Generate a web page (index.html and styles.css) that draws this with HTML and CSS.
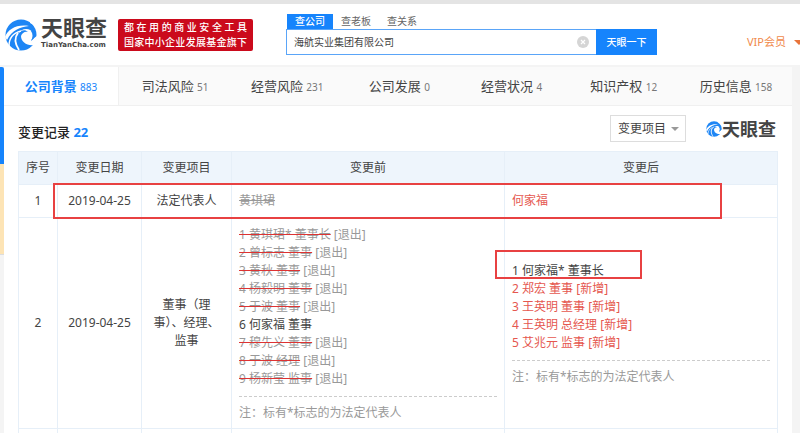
FILE: index.html
```html
<!DOCTYPE html>
<html lang="zh-CN">
<head>
  <meta charset="UTF-8">
  <meta name="viewport" content="width=device-width, initial-scale=1.0">
  <title>海航实业集团有限公司 - 天眼查</title>
  <link rel="stylesheet" href="styles.css">
</head>
<body>
  <svg class="defs" width="0" height="0" aria-hidden="true">
    <symbol id="swirl" viewBox="0 0 32 32">
      <circle cx="16" cy="16" r="15.5" fill="#1e86f5"/>
      <!-- opening of the eye -->
      <path d="M13 15C16 9 25 8 28 14C29 17 28 19 26 21L32 17L32 23L29 26C22 27 16 23 16 17C17 14 20 12 23 13C20 10 16 11 13 15Z" fill="#fff"/>
      <path d="M28 12C31 15 31 19 26 22C28 18 28 15 26 12Z" fill="#1e86f5"/>
      <!-- light streaks -->
      <path d="M0 18C3 10 12 5 24 7C15 8 7 11 2 21Z" fill="#fff"/>
      <path d="M4 27C4 19 8 14 16 12" fill="none" stroke="#fff" stroke-width="1.4"/>
      <path d="M13 14C9 19 10 25 14 31" fill="none" stroke="#fff" stroke-width="1.8"/>
      <path d="M25 0L32 0L32 10C30 7 28 5 25 4Z" fill="#fff"/>
    </symbol>
  </svg>

  <header class="header">
    <a class="logo" href="#">
      <svg class="logo-icon"><use href="#swirl"/></svg>
      <span class="logo-text">
        <span class="logo-name">天眼查</span>
        <span class="logo-domain">TianYanCha.com</span>
      </span>
    </a>
    <div class="slogan">
      <p>都在用的商业安全工具</p>
      <p>国家中小企业发展基金旗下</p>
    </div>
    <form class="search" onsubmit="return false">
      <div class="search-tabs">
        <button type="button" class="active">查公司</button>
        <button type="button">查老板</button>
        <button type="button">查关系</button>
      </div>
      <div class="search-row">
        <div class="search-box">
          <input type="text" id="keyword" aria-label="公司名称" value="海航实业集团有限公司">
          <button type="button" class="clear" aria-label="清除">
            <svg viewBox="0 0 12 12"><circle cx="6" cy="6" r="6" fill="#d5d5d5"/><path d="M4 4l4 4M8 4l-4 4" stroke="#fff" stroke-width="1.2"/></svg>
          </button>
        </div>
        <button type="submit" class="search-btn">天眼一下</button>
      </div>
    </form>
    <a class="vip" href="#">VIP会员</a>
  </header>

  <div class="layout">
    <aside class="side">
      <div class="side-blue"></div>
      <div class="side-cream"></div>
      <div class="side-rest"></div>
    </aside>
    <main class="main">
      <nav class="tabs">
        <a href="#" class="active">公司背景 <span>883</span></a>
        <a href="#">司法风险 <span>51</span></a>
        <a href="#">经营风险 <span>231</span></a>
        <a href="#">公司发展 <span>0</span></a>
        <a href="#">经营状况 <span>4</span></a>
        <a href="#">知识产权 <span>12</span></a>
        <a href="#">历史信息 <span>158</span></a>
      </nav>

      <section class="record">
        <div class="record-head">
          <h2>变更记录 <span>22</span></h2>
          <div class="select">
            <select id="item" aria-label="变更项目">
              <option>变更项目</option>
            </select>
          </div>
          <div class="mark">
            <svg class="mark-icon"><use href="#swirl"/></svg>
            <span>天眼查</span>
          </div>
        </div>

        <div class="table-wrap">
          <table>
            <colgroup>
              <col class="c-no">
              <col class="c-date">
              <col class="c-item">
              <col class="c-text">
              <col class="c-text">
            </colgroup>
            <thead>
              <tr><th>序号</th><th>变更日期</th><th>变更项目</th><th>变更前</th><th>变更后</th></tr>
            </thead>
            <tbody>
              <tr>
                <td>1</td>
                <td>2019-04-25</td>
                <td>法定代表人</td>
                <td class="left"><del class="gone">黄琪珺</del></td>
                <td class="left new">何家福</td>
              </tr>
              <tr>
                <td>2</td>
                <td>2019-04-25</td>
                <td>董事（理事）、经理、监事</td>
                <td class="left">
                  <ul>
                    <li class="gone"><del>1 黄琪珺* 董事长</del> [退出]</li>
                    <li class="gone"><del>2 曾标志 董事</del> [退出]</li>
                    <li class="gone"><del>3 黄秋 董事</del> [退出]</li>
                    <li class="gone"><del>4 杨毅明 董事</del> [退出]</li>
                    <li class="gone"><del>5 于波 董事</del> [退出]</li>
                    <li>6 何家福 董事</li>
                    <li class="gone"><del>7 穆先义 董事</del> [退出]</li>
                    <li class="gone"><del>8 于波 经理</del> [退出]</li>
                    <li class="gone"><del>9 杨新莹 监事</del> [退出]</li>
                  </ul>
                  <p class="note">注：标有*标志的为法定代表人</p>
                </td>
                <td class="left">
                  <ul>
                    <li>1 何家福* 董事长</li>
                    <li class="new">2 郑宏 董事 [新增]</li>
                    <li class="new">3 王英明 董事 [新增]</li>
                    <li class="new">4 王英明 总经理 [新增]</li>
                    <li class="new">5 艾兆元 监事 [新增]</li>
                  </ul>
                  <p class="note">注：标有*标志的为法定代表人</p>
                </td>
              </tr>
              <tr class="blank"><td></td><td></td><td></td><td></td><td></td></tr>
            </tbody>
          </table>
          <div class="frame frame-row"></div>
          <div class="frame frame-name"></div>
        </div>
      </section>
    </main>
  </div>
</body>
</html>
```

FILE: styles.css
```css
* {
  box-sizing: border-box;
}

body {
  margin: 0;
  overflow-x: hidden;
  font-family: "Noto Sans", "Noto Sans CJK SC", sans-serif;
  font-size: 12px;
  line-height: 18px;
  color: #444;
  background: #f4f4f4;
}

a {
  color: inherit;
  text-decoration: none;
}

button, input, select {
  font: inherit;
  color: inherit;
  border: 0;
  padding: 0;
  margin: 0;
  background: none;
}

h2, p, ul {
  margin: 0;
  padding: 0;
}

.defs {
  position: absolute;
}

/* header */
.header {
  display: flex;
  align-items: flex-start;
  height: 65px;
  padding: 12px 0 0 5px;
  border-top: 4px solid #e4e4e4;
  background: #fff;
}

.logo {
  display: flex;
  gap: 4px;
}

.logo-icon {
  width: 32px;
  height: 32px;
  margin-top: 3px;
}

.logo-text {
  display: flex;
  flex-direction: column;
  width: 67px;
}

.logo-name {
  font-size: 22px;
  font-weight: 700;
  line-height: 22px;
  color: #444;
}

.logo-domain {
  font-family: "DejaVu Sans", sans-serif;
  font-size: 7px;
  font-weight: 700;
  line-height: 14px;
}

.slogan {
  width: 135px;
  margin: 3px 33px 0 10px;
  padding: 1px 6px;
  border-radius: 2px;
  background: #cb0a1c;
  color: #fff;
  font-size: 10px;
  font-weight: 500;
  line-height: 15px;
}

.slogan p {
  text-align-last: justify;
}

.search {
  flex: 1;
  max-width: 371px;
  font-size: 10px;
}

.search-tabs {
  display: flex;
  margin-top: -2px;
  padding-left: 1px;
  color: #666;
}

.search-tabs button {
  width: 46px;
  height: 15px;
  line-height: 15px;
}

.search-tabs .active {
  background: #1684fc;
  color: #fff;
  font-weight: 500;
}

.search-row {
  display: flex;
  height: 26px;
}

.search-box {
  flex: 1;
  display: flex;
  align-items: center;
  padding: 0 7px;
  border: 1px solid #5aa5f8;
  border-right: 0;
}

.search-box input {
  flex: 1;
  min-width: 0;
  outline: none;
}

.clear {
  width: 12px;
  height: 12px;
}

.clear svg {
  display: block;
}

.search-btn {
  width: 61px;
  background: #1684fc;
  color: #fff;
  font-weight: 500;
}

.vip {
  display: flex;
  align-items: center;
  gap: 8px;
  margin: 16px -4px 0 auto;
  font-size: 11px;
  line-height: 20px;
  color: #f08a4b;
}

.vip::after {
  content: "";
  border: 5px solid transparent;
  border-top-color: #e8743b;
  border-bottom: 0;
}

/* page body */
.layout {
  display: flex;
  padding: 2px 8px 0 0;
}

.side {
  width: 4px;
}

.side-blue {
  height: 97px;
  border-top-right-radius: 2px;
  background: #1684fc;
}

.side-cream {
  height: 90px;
  background: #fde4b5;
}

.side-rest {
  border-top: 1px solid #ddd;
}

.main {
  flex: 1;
  background: #fff;
}

.tabs {
  display: flex;
  height: 39px;
  border-bottom: 1px solid #f0f0f0;
  background: #fafafa;
}

.tabs a {
  flex: 1;
  font-size: 13px;
  line-height: 38px;
  text-align: center;
  white-space: nowrap;
}

.tabs span {
  font-size: 10px;
  color: #777;
}

.tabs .active {
  flex: 0 0 115px;
  border-right: 1px solid #f0f0f0;
  background: #fff;
  color: #1684fc;
  font-weight: 700;
}

.tabs .active span {
  color: #1684fc;
  font-weight: 400;
}

.record {
  padding: 9px 14px 0;
}

.record-head {
  display: flex;
  align-items: center;
  height: 27px;
  margin-bottom: 9px;
}

.record-head h2 {
  margin-right: auto;
  padding-top: 7px;
  font-size: 13px;
  font-weight: 500;
  color: #222;
}

.record-head h2 span {
  color: #1684fc;
  font-weight: 700;
}

.select {
  position: relative;
}

.select select {
  width: 76px;
  height: 27px;
  padding-left: 7px;
  border: 1px solid #ddd;
  background: #fff;
  appearance: none;
}

.select::after {
  content: "";
  position: absolute;
  top: 12px;
  right: 7px;
  border: 4px solid transparent;
  border-top-color: #999;
  border-bottom: 0;
  pointer-events: none;
}

.mark {
  display: flex;
  align-items: center;
  margin: 0 2px 0 20px;
  font-size: 18px;
  font-weight: 700;
}

.mark-icon {
  width: 16px;
  height: 16px;
}

.table-wrap {
  position: relative;
}

table {
  width: 100%;
  table-layout: fixed;
  border-collapse: collapse;
}

.c-no {
  width: 39px;
}

.c-date {
  width: 84px;
}

.c-item {
  width: 90px;
}

th, td {
  height: 33px;
  padding: 6px 7px;
  border: 1px solid #e6eff8;
  text-align: center;
}

th {
  background: #eef5fc;
  font-weight: 400;
}

td.left {
  text-align: left;
}

td ul {
  list-style: none;
  padding-top: 2px;
}

.blank td {
  height: 4px;
  padding: 0;
  border-bottom: 0;
}

.gone {
  color: #999;
}

li del {
  text-decoration: line-through 1px #dd3333;
}

.new {
  color: #e5574f;
}

.note {
  margin-top: 8px;
  padding-top: 7px;
  border-top: 1px dashed #ccc;
  color: #999;
}

/* highlight frames over the table */
.frame {
  position: absolute;
  border: 2px solid #e84142;
}

.frame-row {
  top: 32px;
  left: 35px;
  width: 669px;
  height: 36px;
}

.frame-name {
  top: 99px;
  left: 477px;
  width: 147px;
  height: 29px;
}
```
